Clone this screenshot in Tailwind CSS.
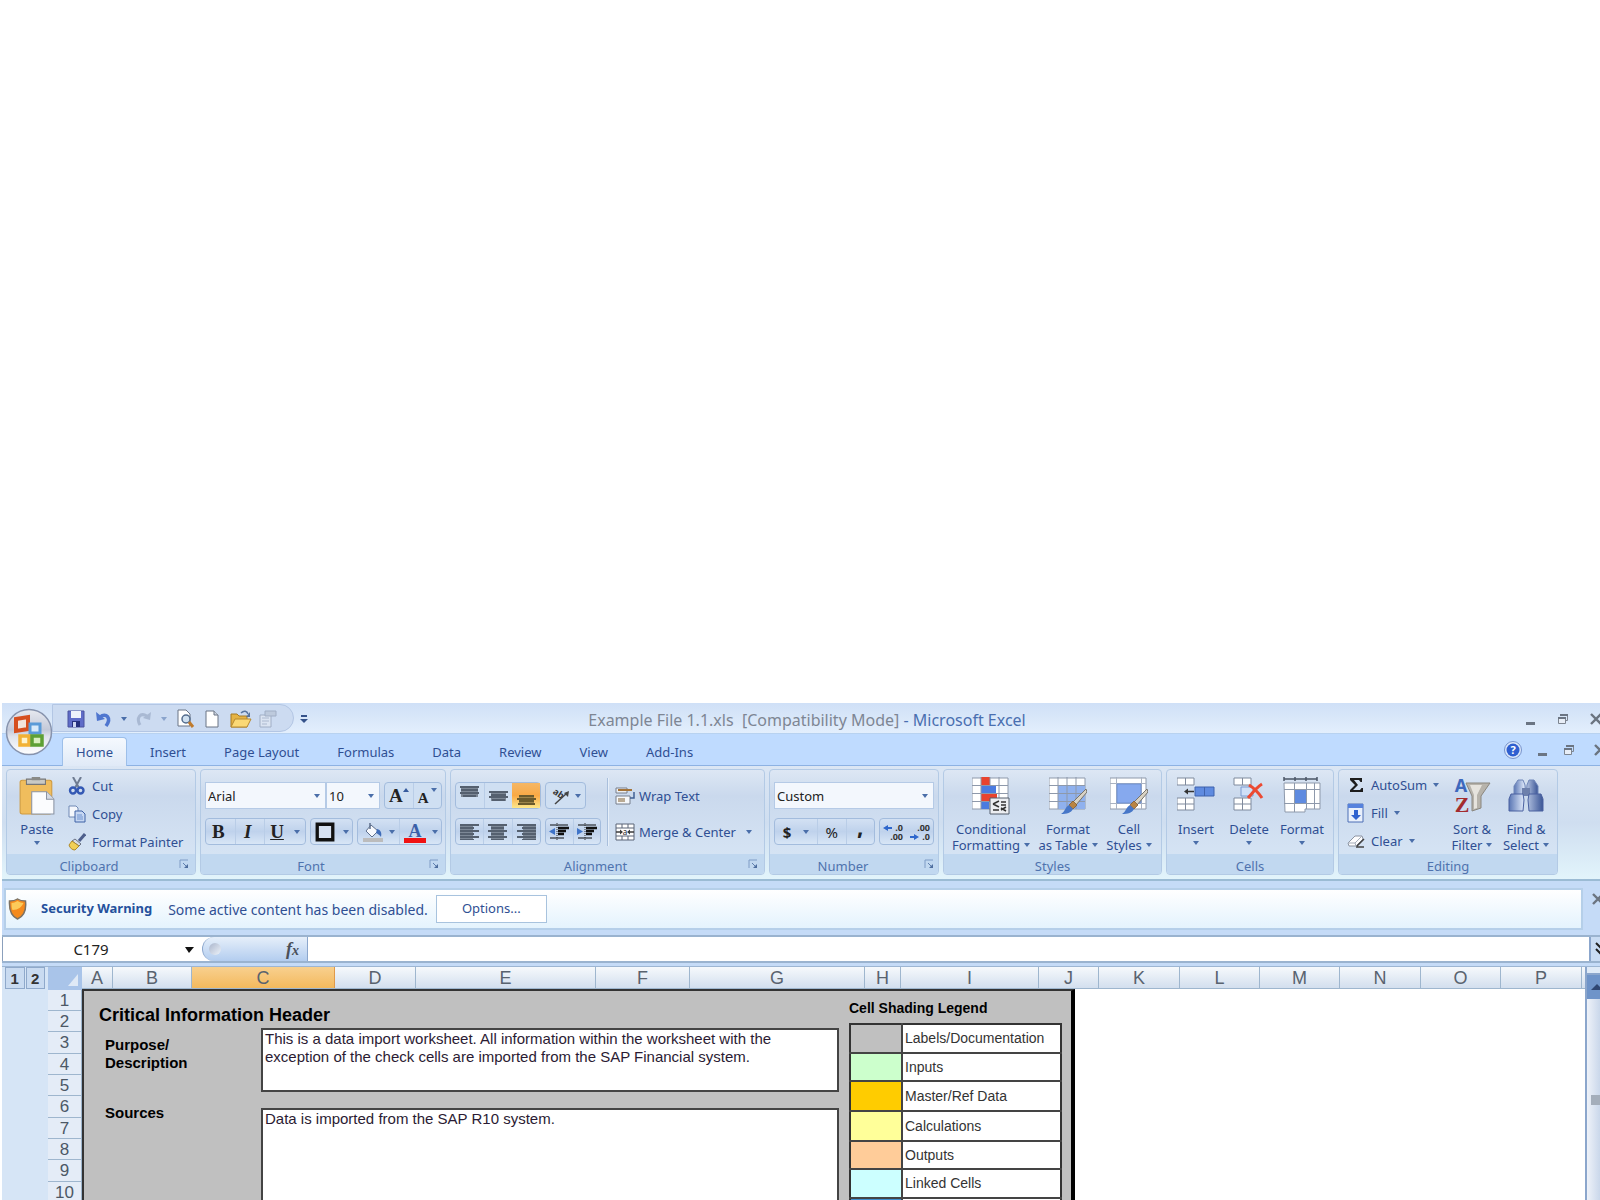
<!DOCTYPE html>
<html lang="en">
<head>
  <meta charset="UTF-8">
  <meta name="viewport" content="width=device-width, initial-scale=1.0">
  <title>Example File 1.1.xls [Compatibility Mode] - Microsoft Excel</title>
  <script src="https://cdn.jsdelivr.net/npm/@tailwindcss/browser@4"></script>
</head>
<body class="h-screen overflow-hidden bg-white pt-[703px] pl-[2px] text-[13px] text-[#2f4f93] font-['Noto_Sans','Open_Sans',sans-serif]">

  <!-- Shared icons -->
  <svg class="hidden">
    <symbol id="down" viewBox="0 0 6 4"><path d="M0 0h6L3 4z" fill="#4a6ea9"/></symbol>
    <symbol id="launcher" viewBox="0 0 10 10"><path d="M1 9V1h8" fill="none" stroke="#7f9cc6"/><path d="M4 4l4 4" stroke="#5f7fae"/><path d="M9 5v4H5z" fill="#4f6f9f"/></symbol>
    <symbol id="min" viewBox="0 0 12 12"><path d="M1 9h9v3H1z" fill="#6b7583"/></symbol>
    <symbol id="restore" viewBox="0 0 12 12"><path d="M3.500 2V1.500h7v6H9" fill="none" stroke="#7d8590"/><path d="M3 1h8v2H3z" fill="#6b7583"/><path d="M1.500 4.500h7v6h-7z" fill="#e8eef7" stroke="#7d8590"/><path d="M1 4h8v2H1z" fill="#6b7583"/></symbol>
    <symbol id="close" viewBox="0 0 14 12"><path d="M2 1l10 10M12 1L2 11" stroke="#6b7480" stroke-width="2.400"/></symbol>
    <symbol id="brush" viewBox="0 0 26 26"><path d="M25 1L12 14l3 3L26 4z" fill="#d8d2c4" stroke="#77736a"/><path d="M12 13l4 4-4 4-4-4z" fill="#b98443" stroke="#7b5425" stroke-width=".7"/><path d="M8 17l4 4c-2 4-6 5-12 5 4-2 4-7 8-9z" fill="#4777c8"/></symbol>
  </svg>

  <div class="-mr-3 flex h-full flex-col bg-[#c5dbf7]">

    <!-- Title bar -->
    <header class="relative grid h-[31px] shrink-0 grid-cols-[1fr_auto_1fr] items-center bg-linear-to-b from-[#cfe0f7] via-[#d9e7f9] to-[#e3effd] border-b border-[#b8d2f0]">
      <button aria-label="Office" class="absolute left-[3px] top-[5px] z-10">
        <svg class="size-[48px]" viewBox="0 0 48 48">
          <defs><linearGradient id="orb" x1="0" y1="0" x2="0" y2="1"><stop offset="0" stop-color="#e8eaf0"/><stop offset=".45" stop-color="#c3c9d9"/><stop offset=".6" stop-color="#dfe3ec"/><stop offset="1" stop-color="#fff"/></linearGradient></defs>
          <circle cx="24" cy="24" r="22.500" fill="url(#orb)" stroke="#8793ad" stroke-width="1.500"/>
          <path d="M11 11l12-2v12l-12 2z" fill="#f3e4dc" stroke="#d64f1e" stroke-width="4"/>
          <rect x="25" y="16" width="10" height="9" fill="#d8eafa" stroke="#5a9bd8" stroke-width="3"/>
          <rect x="15" y="28" width="9" height="9" fill="#fdf3cc" stroke="#f2b134" stroke-width="3.500"/>
          <path d="M27 28h10v9H27z" fill="#d9efbf" stroke="#5da035" stroke-width="3.500"/>
        </svg>
      </button>
      <div class="ml-[50px] flex h-[28px] w-[242px] items-center rounded-r-full border border-[#b3c6e4] bg-[#ccdbf1] pt-0.5 pl-[14px]">
        <button aria-label="Save" class="w-[28px]"><svg class="size-[18px]" viewBox="0 0 18 18"><path d="M1 1h16v16H1z" fill="#5f6cc8" stroke="#4a529e"/><path d="M4 1h10v7H4z" fill="#eef2fb"/><path d="M5 11h8v6H5z" fill="#25307e"/><path d="M6 12h3v5H6z" fill="#cdd6f2"/></svg></button>
        <button aria-label="Undo" class="flex w-[40px] items-center gap-2"><svg class="size-[18px]" viewBox="0 0 18 18"><path d="M5 7c6-5 12 1 6 9" fill="none" stroke="#4f76cf" stroke-width="3.500"/><path d="M1 2l1 9 8-2z" fill="#4f76cf"/></svg><svg class="h-1 w-1.5"><use href="#down"/></svg></button>
        <button aria-label="Redo" class="flex w-[40px] items-center gap-2 opacity-50"><svg class="size-[18px]" viewBox="0 0 18 18"><path d="M12 6C5 2 1 8 5 15" fill="none" stroke="#8798b6" stroke-width="3"/><path d="M16 2l-1 8-7-2z" fill="#8798b6"/></svg><svg class="h-1 w-1.5"><use href="#down"/></svg></button>
        <button aria-label="Print Preview" class="w-[28px]"><svg class="size-[20px]" viewBox="0 0 20 20"><path d="M3 1h8l4 4v12H3z" fill="#fff" stroke="#6b7585"/><circle cx="11" cy="10" r="4" fill="#cfe0f0" stroke="#536c8d" stroke-width="1.500"/><path d="M14 13l4 5" stroke="#c07b2d" stroke-width="3"/></svg></button>
        <button aria-label="New" class="w-[27px]"><svg class="size-[18px]" viewBox="0 0 18 18"><path d="M3 1h8l4 4v12H3z" fill="#fff" stroke="#6b7585"/><path d="M11 1v4h4" fill="#ccd4e0" stroke="#6b7585"/></svg></button>
        <button aria-label="Open" class="w-[29px]"><svg class="h-[18px] w-[22px]" viewBox="0 0 22 18"><path d="M1 4h6l2 2h8v11H1z" fill="#e5b344" stroke="#a67a25"/><path d="M5 9h16l-4 8H1z" fill="#fbd976" stroke="#b78a31"/><path d="M11 3c3-3 6-2 7 1" fill="none" stroke="#56749f" stroke-width="1.500"/><path d="M20 2v5h-4z" fill="#56749f"/></svg></button>
        <button aria-label="Properties" class="opacity-60"><svg class="size-[18px]" viewBox="0 0 18 18"><path d="M1 5h11v12H1z" fill="#e6ebf3" stroke="#8492aa"/><path d="M3 8h7M3 11h7M3 14h5" stroke="#97a4ba"/><path d="M6 1h11v5H6z" fill="#b4bfd0" stroke="#8492aa"/></svg></button>
      </div>
      <button aria-label="Customize Quick Access Toolbar" class="absolute left-[298px] top-[11px]"><svg class="h-2.5 w-2" viewBox="0 0 8 10"><path d="M1 1h6v2H1zM0 5h8L4 9z" fill="#35528a"/></svg></button>
      <h1 class="whitespace-pre pt-1 text-[16px] leading-6 text-[#4a6fb0]"><span class="text-[#7e8694]">Example File 1.1.xls  [Compatibility Mode]</span> - Microsoft Excel</h1>
      <div class="flex items-center justify-end gap-5 pt-0.5 pr-[9px]">
        <button aria-label="Minimize"><svg class="size-3"><use href="#min"/></svg></button>
        <button aria-label="Restore"><svg class="size-3"><use href="#restore"/></svg></button>
        <button aria-label="Close"><svg class="h-3 w-[14px]"><use href="#close"/></svg></button>
      </div>
    </header>

    <!-- Tabs -->
    <nav class="flex h-8 shrink-0 items-end gap-2 border-b border-[#8db2e3] bg-[#bfdbff] pl-[60px] pr-[5px]">
      <button class="-mb-px h-[29px] rounded-t border border-b-0 border-[#9dbfe9] bg-linear-to-b from-[#f5f9fe] to-[#e0eaf7] px-[13px] pt-0.5">Home</button>
      <button class="h-[28px] px-[15px] pt-1">Insert</button>
      <button class="h-[28px] px-[15px] pt-1">Page Layout</button>
      <button class="h-[28px] px-[15px] pt-1">Formulas</button>
      <button class="h-[28px] px-[15px] pt-1">Data</button>
      <button class="h-[28px] px-[15px] pt-1">Review</button>
      <button class="h-[28px] px-[15px] pt-1">View</button>
      <button class="h-[28px] px-[15px] pt-1">Add-Ins</button>
      <div class="ml-auto flex h-full items-center gap-[14px]">
        <button aria-label="Help"><svg class="size-5" viewBox="0 0 20 20"><circle cx="10" cy="10" r="8.500" fill="#dbe8fa" stroke="#7893cc"/><circle cx="10" cy="10" r="6.500" fill="#2f5fd0"/><text x="10" y="14" text-anchor="middle" font-size="11" font-weight="bold" fill="#fff">?</text></svg></button>
        <button aria-label="Minimize workbook"><svg class="size-3"><use href="#min"/></svg></button>
        <button aria-label="Restore workbook"><svg class="size-3"><use href="#restore"/></svg></button>
        <button aria-label="Close workbook" class="ml-1"><svg class="h-3 w-[14px]"><use href="#close"/></svg></button>
      </div>
    </nav>

    <!-- Ribbon -->
    <div class="flex h-[115px] shrink-0 gap-1 border-b-2 border-[#9bbbd4] bg-linear-to-b from-[#dbe6f4] via-[#cfdef0] to-[#e2f4fb] px-1 pt-[3px] pb-1 leading-4">

      <section class="flex w-[190px] flex-col overflow-hidden rounded border border-[#b3cae5] bg-linear-to-b from-[#dde7f4] via-[#cad9ed] via-25% to-[#d9e7f6]">
        <div class="flex flex-1 pl-1">
          <button class="flex w-[52px] flex-col items-center pt-[7px]">
            <svg class="size-[38px]" viewBox="0 0 36 36"><rect x="2" y="3" width="30" height="32" rx="2" fill="#f0bd5d" stroke="#cf9a3f"/><path d="M8 2h18v5H8z" fill="#c9c9c4" stroke="#777"/><path d="M13 0h8v3h-8z" fill="#8a8a86"/><path d="M13 14h14l7 7v14H13z" fill="#fbfcfe" stroke="#8a93a3"/><path d="M27 14v7h7" fill="#d5dae3" stroke="#8a93a3"/></svg>
            <span class="mt-1.5">Paste</span>
            <svg class="mt-1 h-1 w-1.5"><use href="#down"/></svg>
          </button>
          <div class="flex flex-col gap-2.5 pt-[7px] pl-[5px]">
            <button class="flex items-center gap-1.5"><svg class="size-[18px]" viewBox="0 0 18 18"><path d="M5 0l6 11M13 0L7 11" stroke="#6f7c92" stroke-width="2"/><circle cx="5" cy="13.500" r="3" fill="none" stroke="#3459b4" stroke-width="2.400"/><circle cx="12.500" cy="13.500" r="3" fill="none" stroke="#3459b4" stroke-width="2.400"/></svg>Cut</button>
            <button class="flex items-center gap-1.5"><svg class="size-[18px]" viewBox="0 0 18 18"><path d="M1 1h7l2 2v9H1z" fill="#f4f7fc" stroke="#6f88b4"/><path d="M7 6h7l3 3v8H7z" fill="#c6d7f2" stroke="#3f62a6"/><path d="M9 10h5M9 12h6M9 14h6" stroke="#6f93d0"/></svg>Copy</button>
            <button class="flex items-center gap-1.5 whitespace-nowrap"><svg class="size-[18px]" viewBox="0 0 18 18"><path d="M17 1l-6 7" stroke="#4e5f8c" stroke-width="3"/><path d="M7 6l6 5-2 2-7-5z" fill="#d7dbe4" stroke="#6b7384"/><path d="M4 8l7 5-4 4c-3 0-5-2-6-5z" fill="#f1cf57" stroke="#b08b2b"/></svg>Format Painter</button>
          </div>
        </div>
        <footer class="flex h-5 items-center bg-[#c1d8f0] pr-1.5 text-[#4f73ae]"><span class="flex-1 pt-1 pr-2 text-center">Clipboard</span><button aria-label="Clipboard options"><svg class="size-2.5"><use href="#launcher"/></svg></button></footer>
      </section>

      <section class="flex w-[246px] flex-col overflow-hidden rounded border border-[#b3cae5] bg-linear-to-b from-[#dde7f4] via-[#cad9ed] via-25% to-[#d9e7f6]">
        <div class="flex flex-1 flex-col gap-[9px] pt-3 pl-1">
          <div class="flex h-[27px]">
            <div class="relative w-[121px]"><select aria-label="Font name" class="h-full w-full appearance-none border border-[#b5cae6] bg-[#f3f7fd] pl-0.5 text-[#222]"><option>Arial</option></select><svg class="absolute right-1.5 top-3 h-1 w-1.5"><use href="#down"/></svg></div>
            <div class="relative w-[54px]"><select aria-label="Font size" class="h-full w-full appearance-none border border-[#b5cae6] bg-[#f3f7fd] pl-0.5 text-[#222]"><option>10</option></select><svg class="absolute right-1.5 top-3 h-1 w-1.5"><use href="#down"/></svg></div>
            <div class="ml-1 flex w-[58px] rounded-sm border border-[#a3bcdd] bg-[#cfdff2] font-['Liberation_Serif',serif] font-bold text-[#222]">
              <button aria-label="Grow font" class="flex flex-1 items-center justify-center border-r border-[#b9cde7] text-[19px]">A<svg class="mb-3 size-1.5" viewBox="0 0 6 6"><path d="M0 5h6L3 1z" fill="#365a9d"/></svg></button>
              <button aria-label="Shrink font" class="flex flex-1 items-center justify-center pt-1 text-[15px]">A<svg class="mb-4 ml-0.5 h-1 w-1.5"><use href="#down"/></svg></button>
            </div>
          </div>
          <div class="flex h-[27px] gap-1 font-['Liberation_Serif',serif] text-[19px] text-[#222]">
            <div class="flex w-[101px] rounded-sm border border-[#a3bcdd] bg-linear-to-b from-[#d3e1f3] via-[#bfd2ec] to-[#d8e6f6]">
              <button class="flex-1 pr-1 font-black">B</button>
              <button class="flex-1 border-x border-[#b9cde7] pr-1 font-bold italic">I</button>
              <button class="flex w-[40px] items-center justify-center gap-2.5 font-bold"><span class="underline">U</span><svg class="h-1 w-1.5"><use href="#down"/></svg></button>
            </div>
            <button aria-label="Borders" class="flex w-[43px] items-center justify-center gap-2 rounded-sm border border-[#a3bcdd] bg-linear-to-b from-[#d3e1f3] via-[#bfd2ec] to-[#d8e6f6]"><svg class="size-5" viewBox="0 0 18 18"><path d="M2 2h14v14H2z" fill="#d7e2f2" stroke="#111" stroke-width="3"/></svg><svg class="h-1 w-1.5"><use href="#down"/></svg></button>
            <div class="flex w-[85px] rounded-sm border border-[#a3bcdd] bg-linear-to-b from-[#d3e1f3] via-[#bfd2ec] to-[#d8e6f6]">
              <button aria-label="Fill color" class="flex flex-1 items-center justify-center gap-1.5 border-r border-[#b9cde7]"><svg class="size-[20px]" viewBox="0 0 20 20"><path d="M8 3l7 6-6 6-6-6z" fill="#f7f9fd" stroke="#5d6e8b"/><path d="M7 1v6" stroke="#5d6e8b" stroke-width="1.500"/><path d="M14 7c4 1 5 4 4 8-1-2-3-3-5-4z" fill="#3f6cb8"/><path d="M0 16h20v4H0z" fill="#bcbcbc"/></svg><svg class="h-1 w-1.5"><use href="#down"/></svg></button>
              <button aria-label="Font color" class="flex flex-1 items-center justify-center gap-1.5"><svg class="size-[22px]" viewBox="0 0 22 22"><text x="11" y="16" text-anchor="middle" font-size="18" font-weight="bold" fill="#3a5fa8">A</text><path d="M0 17h22v5H0z" fill="#f01212"/></svg><svg class="h-1 w-1.5"><use href="#down"/></svg></button>
            </div>
          </div>
        </div>
        <footer class="flex h-5 items-center bg-[#c1d8f0] pr-1.5 text-[#4f73ae]"><span class="flex-1 pt-1 pr-2 text-center">Font</span><button aria-label="Font options"><svg class="size-2.5"><use href="#launcher"/></svg></button></footer>
      </section>

      <section class="flex w-[315px] flex-col overflow-hidden rounded border border-[#b3cae5] bg-linear-to-b from-[#dde7f4] via-[#cad9ed] via-25% to-[#d9e7f6]">
        <div class="flex flex-1 pl-1">
          <div class="flex flex-col gap-[9px] pt-3">
            <div class="flex h-[27px] gap-1">
              <div class="flex w-[86px] rounded-sm border border-[#a3bcdd] bg-[#cfdff2]">
                <button aria-label="Top align" class="flex flex-1 items-center justify-center border-r border-[#b9cde7]"><svg class="h-5 w-[19px]" viewBox="0 0 19 20"><path d="M1 0h17v11H1z" fill="#7d8896"/><path d="M0 0h19v2H0zM0 6h19v2H0zM1 3h17v2H1zM3 9h13v2H3z" fill="#55606f"/></svg></button>
                <button aria-label="Middle align" class="flex flex-1 items-center justify-center"><svg class="h-5 w-[19px]" viewBox="0 0 19 20"><path d="M2 5h15v10H2z" fill="#7d8896"/><path d="M0 5h19v2H0zM2 8h15v2H2zM0 10h19v2H0zM3 13h13v2H3z" fill="#55606f"/></svg></button>
                <button aria-label="Bottom align" class="flex flex-1 items-center justify-center bg-linear-to-b from-[#f5b765] via-[#f9a944] to-[#fde78a]"><svg class="h-5 w-[19px]" viewBox="0 0 19 20"><path d="M2 9h15v10H2z" fill="#9c844a"/><path d="M2 9h15v2H2zM0 12h19v2H0zM2 14h15v2H2zM1 17h17v2H1z" fill="#6b5a2c"/></svg></button>
              </div>
              <button aria-label="Orientation" class="flex w-[41px] items-center justify-center gap-1 rounded-sm border border-[#a3bcdd] bg-[#cfdff2]"><svg class="h-[18px] w-5" viewBox="0 0 20 18"><text x="1" y="9" font-size="9" font-weight="bold" fill="#333" transform="rotate(35 6 8)">ab</text><path d="M4 17L16 6" stroke="#444" stroke-width="1.500"/><path d="M18 4l-1 6-4-4z" fill="#444"/></svg><svg class="h-1 w-1.5"><use href="#down"/></svg></button>
            </div>
            <div class="flex h-[27px] gap-1">
              <div class="flex w-[86px] rounded-sm border border-[#a3bcdd] bg-linear-to-b from-[#d3e1f3] via-[#bfd2ec] to-[#d8e6f6]">
                <button aria-label="Align left" class="flex flex-1 items-center justify-center border-r border-[#b9cde7]"><svg class="h-4 w-[19px]" viewBox="0 0 19 16"><path d="M0 0h13v16H0z" fill="#7d8896"/><path d="M0 0h19v2H0zM0 3h14v2H0zM0 6h19v2H0zM0 9h14v2H0zM0 12h19v2H0zM0 15h14v1H0z" fill="#55606f"/></svg></button>
                <button aria-label="Center" class="flex flex-1 items-center justify-center border-r border-[#b9cde7]"><svg class="h-4 w-[19px]" viewBox="0 0 19 16"><path d="M3 0h13v16H3z" fill="#7d8896"/><path d="M0 0h19v2H0zM3 3h13v2H3zM0 6h19v2H0zM3 9h13v2H3zM0 12h19v2H0zM3 15h13v1H3z" fill="#55606f"/></svg></button>
                <button aria-label="Align right" class="flex flex-1 items-center justify-center"><svg class="h-4 w-[19px]" viewBox="0 0 19 16"><path d="M6 0h13v16H6z" fill="#7d8896"/><path d="M0 0h19v2H0zM5 3h14v2H5zM0 6h19v2H0zM5 9h14v2H5zM0 12h19v2H0zM5 15h14v1H5z" fill="#55606f"/></svg></button>
              </div>
              <div class="flex w-[56px] rounded-sm border border-[#a3bcdd] bg-linear-to-b from-[#d3e1f3] via-[#bfd2ec] to-[#d8e6f6]">
                <button aria-label="Decrease indent" class="flex flex-1 items-center justify-center border-r border-[#b9cde7]"><svg class="h-[18px] w-5" viewBox="0 0 20 18"><path d="M1 2h18M1 15h14" stroke="#6b7480" stroke-width="2"/><path d="M9 5h11M9 8h8M9 11h6" stroke="#111" stroke-width="2.500"/><path d="M8 0v18" stroke="#333" stroke-dasharray="1 1"/><path d="M6 5v7L0 8.500z" fill="#3f74c9"/></svg></button>
                <button aria-label="Increase indent" class="flex flex-1 items-center justify-center"><svg class="h-[18px] w-5" viewBox="0 0 20 18"><path d="M1 2h18M1 15h14" stroke="#6b7480" stroke-width="2"/><path d="M9 5h11M9 8h8M9 11h6" stroke="#111" stroke-width="2.500"/><path d="M8 0v18" stroke="#333" stroke-dasharray="1 1"/><path d="M0 5v7l6-3.500z" fill="#3f74c9"/></svg></button>
              </div>
            </div>
          </div>
          <div class="mx-1.5 mt-2 mb-2 w-0.5 border-l border-[#a9bfdc] bg-[#e6eff9]"></div>
          <div class="flex flex-col gap-[18px] pt-[17px] whitespace-nowrap">
            <button class="flex items-center gap-1"><svg class="h-[18px] w-5" viewBox="0 0 20 18"><path d="M1 1h11v5H1z" fill="#eceff4" stroke="#777f8c"/><path d="M3 3h14" stroke="#a4743a" stroke-width="2"/><path d="M1 9h14v8H1z" fill="#f6f8fb" stroke="#777f8c"/><path d="M3 11h7v4H3z" fill="#b9aa94"/><path d="M19 5v6h-4" fill="none" stroke="#3f5f93" stroke-width="1.500"/></svg>Wrap Text</button>
            <button class="flex items-center gap-1"><svg class="h-[18px] w-5" viewBox="0 0 20 18"><path d="M1 1h18v16H1zM1 5h18M1 13h18M7 1v4M13 1v4M7 13v4M13 13v4" fill="#fff" stroke="#5a6576"/><path d="M1 9h5M19 9h-5" stroke="#3b3b3b" stroke-width="1.500"/><path d="M5 6.500v5L8 9zM15 6.500v5L12 9z" fill="#3b3b3b"/><text x="10" y="12" text-anchor="middle" font-size="8" fill="#222">a</text></svg>Merge &amp; Center<svg class="ml-1.5 h-1 w-1.5"><use href="#down"/></svg></button>
          </div>
        </div>
        <footer class="flex h-5 items-center bg-[#c1d8f0] pr-1.5 text-[#4f73ae]"><span class="flex-1 pt-1 pr-2 text-center">Alignment</span><button aria-label="Alignment options"><svg class="size-2.5"><use href="#launcher"/></svg></button></footer>
      </section>

      <section class="flex w-[170px] flex-col overflow-hidden rounded border border-[#b3cae5] bg-linear-to-b from-[#dde7f4] via-[#cad9ed] via-25% to-[#d9e7f6]">
        <div class="flex flex-1 flex-col gap-[9px] px-1 pt-3">
          <div class="relative h-[27px]"><select aria-label="Number format" class="h-full w-full appearance-none border border-[#b5cae6] bg-[#f3f7fd] pl-0.5 text-[#222]"><option>Custom</option></select><svg class="absolute right-1.5 top-3 h-1 w-1.5"><use href="#down"/></svg></div>
          <div class="flex h-[27px] gap-1 text-[15px] text-[#222]">
            <div class="flex w-[101px] rounded-sm border border-[#a3bcdd] bg-linear-to-b from-[#d3e1f3] via-[#bfd2ec] to-[#d8e6f6]">
              <button class="flex w-[42px] items-center justify-center gap-3 font-bold">$<svg class="h-1 w-1.5"><use href="#down"/></svg></button>
              <button class="flex-1 border-x border-[#b9cde7]">%</button>
              <button class="flex-1 pb-2 text-[19px] font-black">,</button>
            </div>
            <div class="flex flex-1 rounded-sm border border-[#a3bcdd] bg-linear-to-b from-[#d3e1f3] via-[#bfd2ec] to-[#d8e6f6]">
              <button aria-label="Increase decimal" class="flex flex-1 items-center justify-center"><svg class="h-5 w-5 overflow-visible" viewBox="0 0 20 20"><text x="20" y="9" text-anchor="end" font-size="9" font-weight="bold" fill="#333">.0</text><text x="20" y="18" text-anchor="end" font-size="9" font-weight="bold" fill="#333">.00</text><path d="M0 6l5-3v2h4v2H5v2z" fill="#2f67cc"/></svg></button>
              <button aria-label="Decrease decimal" class="flex flex-1 items-center justify-center"><svg class="h-5 w-5 overflow-visible" viewBox="0 0 20 20"><text x="20" y="9" text-anchor="end" font-size="9" font-weight="bold" fill="#333">.00</text><text x="20" y="18" text-anchor="end" font-size="9" font-weight="bold" fill="#333">.0</text><path d="M9 15l-5-3v2H0v2h4v2z" fill="#2f67cc"/></svg></button>
            </div>
          </div>
        </div>
        <footer class="flex h-5 items-center bg-[#c1d8f0] pr-1 text-[#4f73ae]"><span class="flex-1 pt-1 pr-2 text-center">Number</span><button aria-label="Number options"><svg class="size-2.5"><use href="#launcher"/></svg></button></footer>
      </section>

      <section class="flex w-[219px] flex-col overflow-hidden rounded border border-[#b3cae5] bg-linear-to-b from-[#dde7f4] via-[#cad9ed] via-25% to-[#d9e7f6]">
        <div class="flex flex-1 pl-1 whitespace-nowrap">
          <button class="flex w-[86px] flex-col items-center pt-[7px]">
            <svg class="size-[38px]" viewBox="0 0 38 38"><path d="M0 1h36v31H0z" fill="#fff" stroke="#8e99ab"/><path d="M9 0h9v8H9zM9 17h16v8H9z" fill="#e8432e"/><path d="M9 9h15v8H9zM9 25h8v7H9z" fill="#4b7be0"/><path d="M0 8.500h36M0 16.500h36M0 24.500h36M9 0v32M18 0v8M27 0v32M18 25v7" stroke="#8e99ab"/><path d="M18 21h19v16H18z" fill="#eceef2" stroke="#555e6c"/><path d="M21 27l6-3M21 27l6 3M21 33h6M29 25h5M29 28h5M29 33l5-3M29 31l5 3" stroke="#333" stroke-width="1.500"/></svg>
            <span class="mt-1.5">Conditional</span>
            <span class="flex items-center gap-1">Formatting<svg class="h-1 w-1.5"><use href="#down"/></svg></span>
          </button>
          <button class="flex w-[68px] flex-col items-center pt-[7px]">
            <svg class="size-[38px]" viewBox="0 0 38 38"><path d="M0 1h36v31H0z" fill="#fff" stroke="#8e99ab"/><path d="M9 9h27v23H9z" fill="#8fb1ee"/><path d="M0 8.500h36M0 16.500h36M0 24.500h36M9 0v32M18 0v32M27 0v32" stroke="#8e99ab"/><use href="#brush" x="12" y="11" width="26" height="26"/></svg>
            <span class="mt-1.5">Format</span>
            <span class="flex items-center gap-1">as Table<svg class="h-1 w-1.5"><use href="#down"/></svg></span>
          </button>
          <button class="flex w-[54px] flex-col items-center pt-[7px]">
            <svg class="size-[38px]" viewBox="0 0 38 38"><path d="M0 1h36v31H0z" fill="#fff" stroke="#8e99ab"/><path d="M0 6.500h36M0 26.500h36M6.500 0v32M31.500 0v32" stroke="#aab3c2"/><path d="M7 7h24v19H7z" fill="#86a9ee" stroke="#7191cf"/><use href="#brush" x="12" y="11" width="26" height="26"/></svg>
            <span class="mt-1.5">Cell</span>
            <span class="flex items-center gap-1">Styles<svg class="h-1 w-1.5"><use href="#down"/></svg></span>
          </button>
        </div>
        <footer class="h-5 bg-[#c1d8f0] pt-1 text-center text-[#4f73ae]">Styles</footer>
      </section>

      <section class="flex w-[168px] flex-col overflow-hidden rounded border border-[#b3cae5] bg-linear-to-b from-[#dde7f4] via-[#cad9ed] via-25% to-[#d9e7f6]">
        <div class="flex flex-1 pl-0.5">
          <button class="flex w-[54px] flex-col items-center pt-[7px]">
            <svg class="size-[38px]" viewBox="0 0 38 38"><path d="M0 1h17v7H0zM0 21h17v12H0zM0 27h17M8.500 1v7M8.500 21v12" fill="#fff" stroke="#7f8a9d"/><path d="M18 10h19v9H18zM27.500 10v9" fill="#5f8be0" stroke="#3f63ad"/><path d="M9 14.500h8" stroke="#333" stroke-width="1.500"/><path d="M7 14.500l4-3v6z" fill="#333"/></svg>
            <span class="mt-1.5">Insert</span>
            <svg class="mt-1 h-1 w-1.5"><use href="#down"/></svg>
          </button>
          <button class="flex w-[52px] flex-col items-center pt-[7px]">
            <svg class="size-[38px]" viewBox="0 0 38 38"><path d="M4 1h17v7H4zM4 21h17v12H4zM4 27h17M12.500 1v7M12.500 21v12" fill="#fff" stroke="#7f8a9d"/><path d="M11 10h12v9H11z" fill="#cfe0f8" stroke="#7b9ad2"/><path d="M19 8c5 3 9 7 13 13M32 7c-5 3-9 8-14 14" fill="none" stroke="#ec4a32" stroke-width="3"/></svg>
            <span class="mt-1.5">Delete</span>
            <svg class="mt-1 h-1 w-1.5"><use href="#down"/></svg>
          </button>
          <button class="flex w-[54px] flex-col items-center pt-[7px]">
            <svg class="size-[38px]" viewBox="0 0 38 38"><path d="M1 2h33M1 0v4M12 0v4M23 0v4M34 0v4" stroke="#4b5566" stroke-width="1.500"/><path d="M1 6h36v26H22v3H2z" fill="#fff" stroke="#8e99ab"/><path d="M1 12.500h36M1 26.500h36M11.500 6v29M23.500 6v26M31.500 6v26" stroke="#8e99ab"/><path d="M12 13h11v13H12z" fill="#5f8be0"/></svg>
            <span class="mt-1.5">Format</span>
            <svg class="mt-1 h-1 w-1.5"><use href="#down"/></svg>
          </button>
        </div>
        <footer class="h-5 bg-[#c1d8f0] pt-1 text-center text-[#4f73ae]">Cells</footer>
      </section>

      <section class="flex w-[220px] flex-col overflow-hidden rounded border border-[#b3cae5] bg-linear-to-b from-[#dde7f4] via-[#cad9ed] via-25% to-[#d9e7f6]">
        <div class="flex flex-1 pl-2 whitespace-nowrap">
          <div class="flex w-[98px] flex-col gap-[9px] pt-1.5">
            <button class="flex items-center gap-1.5"><svg class="size-[18px]" viewBox="0 0 18 18"><path d="M3 2h12v4h-1.500L12 4H7l4 5-5 5h7l1.500-2H16v4H3v-2l5-5-5-5z" fill="#1d1d1d"/></svg>AutoSum<svg class="h-1 w-1.5"><use href="#down"/></svg></button>
            <button class="flex items-center gap-1.5"><svg class="h-5 w-[18px]" viewBox="0 0 18 20"><path d="M1 1h15v18H1z" fill="#e9f0fb" stroke="#4c6fb5"/><path d="M1 1h15v4H1z" fill="#5682dd"/><path d="M7 7h4v5h3l-5 5-5-5h3z" fill="#2f62cf"/></svg>Fill<svg class="h-1 w-1.5"><use href="#down"/></svg></button>
            <button class="flex items-center gap-1.5"><svg class="size-[18px]" viewBox="0 0 18 18"><path d="M8 4h7l1 3-7 7H2l-1-3z" fill="#fdfdfe" stroke="#8c94a2"/><path d="M9 14l-1-3H1M8 11l7-7" fill="none" stroke="#a5adba"/><path d="M9 15h8M10 14l7-7" stroke="#444" stroke-width="1.500"/></svg>Clear<svg class="h-1 w-1.5"><use href="#down"/></svg></button>
          </div>
          <button class="flex w-[54px] flex-col items-center pt-[7px]">
            <svg class="size-[38px] overflow-visible" viewBox="0 0 38 38"><text x="8" y="15" text-anchor="middle" font-size="18" font-weight="bold" fill="#3d68bd">A</text><text class="font-['Liberation_Serif',serif]" x="9" y="35" text-anchor="middle" font-size="22" font-weight="bold" fill="#a32b2e">Z</text><path d="M13 6h24L28 19v12l-9 3V19z" fill="#b7b3ab" stroke="#8a867e"/><path d="M17 8h12l-5 10v13l-3 1V18z" fill="#e6e3dd"/></svg>
            <span class="mt-1.5">Sort &amp;</span>
            <span class="flex items-center gap-1">Filter<svg class="h-1 w-1.5"><use href="#down"/></svg></span>
          </button>
          <button class="flex w-[54px] flex-col items-center pt-[7px]">
            <svg class="size-[38px]" viewBox="0 0 38 38"><defs><linearGradient id="lens"><stop offset="0" stop-color="#5a76b4"/><stop offset=".4" stop-color="#d3dff4"/><stop offset="1" stop-color="#3a5596"/></linearGradient></defs><path d="M11 3h5l2 5 1 10H7V9zM22 3h5l4 6v9H19l1-10z" fill="url(#lens)" stroke="#7187b8"/><path d="M15 11h8v8h-8z" fill="#6d80ac"/><path d="M4 17h12l1 6-1 11H2V22zM22 17h12l2 5v12H22l-1-11z" fill="url(#lens)" stroke="#4a61a0"/></svg>
            <span class="mt-1.5">Find &amp;</span>
            <span class="flex items-center gap-1">Select<svg class="h-1 w-1.5"><use href="#down"/></svg></span>
          </button>
        </div>
        <footer class="h-5 bg-[#c1d8f0] pt-1 text-center text-[#4f73ae]">Editing</footer>
      </section>
    </div>

    <!-- Security bar -->
    <div class="mt-[7px] mb-[5px] flex h-[42px] shrink-0 pl-0.5">
      <div class="flex flex-1 items-center border-2 border-[#b5cfe9] bg-linear-to-b from-white to-[#e4f3fd] pl-0.5">
        <svg class="h-[22px] w-[19px]" viewBox="0 0 19 22"><path d="M9.500 1c3 2 5 2 8 2 1 9-1 15-8 18C3 18 1 12 1.500 3c3 0 5 0 8-2z" fill="#f58a1c" stroke="#7b7265" stroke-width="1.500"/><path d="M9.500 3c-2 1-4 2-6 2 0 3 0 5 1 7 6 0 9-3 11-7-2 0-4-1-6-2z" fill="#fccb5a"/></svg>
        <strong class="ml-3.5 text-[#24509c]">Security Warning</strong>
        <span class="ml-4 text-[14px]">Some active content has been disabled.</span>
        <button class="ml-2 h-[28px] w-[111px] border border-[#a8c3de] bg-white">Options...</button>
      </div>
      <button aria-label="Close message bar" class="mb-5 w-[29px] pl-2"><svg class="h-3 w-[14px]"><use href="#close"/></svg></button>
    </div>

    <!-- Formula bar -->
    <div class="flex h-[28px] shrink-0 border-y-2 border-[#9ab3cf] bg-white">
      <div class="relative w-[200px] border-l border-[#8ba0bc]">
        <input aria-label="Name box" value="C179" class="h-full w-[176px] text-center text-[15px] text-[#222]">
        <svg class="absolute right-2 top-[10px] h-1.5 w-[9px]" viewBox="0 0 9 6"><path d="M0 0h9L4 6z" fill="#111"/></svg>
      </div>
      <div class="flex w-[106px] items-center justify-between rounded-l-full border-r border-l border-[#8ba6cc] bg-linear-to-b from-[#e6effa] to-[#b3cdef] pr-2 pl-1.5">
        <span class="size-3 rounded-full bg-linear-to-br from-[#aab6cc] to-[#eef3fa]"></span>
        <button aria-label="Insert function" class="font-['Liberation_Serif',serif] text-[18px] font-bold italic text-[#4a4f59]">f<span class="text-[14px]">x</span></button>
      </div>
      <input aria-label="Formula bar" class="min-w-0 flex-1">
      <button aria-label="Expand formula bar" class="w-[23px] border-l-2 border-[#8ba6cc] bg-[#c9dcf3] pl-1"><svg class="h-4 w-2.5" viewBox="0 0 10 16"><path d="M1 2l4 4 4-4M1 8l4 4 4-4" fill="none" stroke="#222" stroke-width="2"/></svg></button>
    </div>

    <!-- Sheet -->
    <div class="mt-[3px] flex min-h-0 flex-1 border-t border-[#9db6d3] font-['Liberation_Sans',Arial,sans-serif]">
      <div class="w-[46px] shrink-0 bg-[#d6e5f6] pl-[3px]">
        <div class="flex h-[22px] w-10 gap-px text-[15px] font-bold text-[#333]">
          <button class="flex-1 border border-[#8fa9cb] bg-[#c9dbf1]">1</button>
          <button class="flex-1 border border-[#8fa9cb] bg-[#c9dbf1]">2</button>
        </div>
      </div>
      <div class="flex w-[34px] shrink-0 flex-col bg-[#e4ecf7]">
        <button aria-label="Select all" class="flex h-[23px] shrink-0 items-end justify-end bg-[#a9c4e9] p-1"><svg class="h-3 w-2.5" viewBox="0 0 10 12"><path d="M10 0v12H0z" fill="#dfe9f6"/></svg></button>
        <div id="rowHeaders" class="text-center text-[17px] leading-[21px] text-[#4c5866]"></div>
      </div>
      <div class="flex min-w-0 flex-1 flex-col overflow-hidden bg-white">
        <div id="colHeaders" class="flex h-[22px] shrink-0 border-b border-[#9eb6ce] bg-linear-to-b from-[#f6f9fc] to-[#d3dfee] text-center text-[18px] leading-[22px] text-[#59636f]"></div>
        <div class="flex w-[993px] flex-1 border-t-2 border-r-4 border-l-2 border-t-[#333] border-r-black border-l-[#333] bg-[#c0c0c0] pl-[15px] text-black">
          <div class="w-[740px] shrink-0 pt-[11px]">
            <h2 class="h-[26px] text-[18px] font-bold leading-[26px]">Critical Information Header</h2>
            <div class="flex">
              <h3 class="w-[162px] pt-2 pl-1.5 text-[15px] font-bold leading-[18px]">Purpose/<br>Description</h3>
              <p class="h-[64px] w-[578px] border-2 border-[#444] bg-white pl-0.5 text-[15px] leading-[18px] text-[#2b1b33]">This is a data import worksheet. All information within the worksheet with the<br>exception of the check cells are imported from the SAP Financial system.</p>
            </div>
            <div class="mt-3 flex">
              <h3 class="w-[162px] pl-1.5 text-[15px] font-bold leading-[18px]">Sources</h3>
              <p class="mt-1 h-[140px] w-[578px] border-2 border-[#444] bg-white pl-0.5 text-[15px] leading-[18px] text-[#2b1b33]">Data is imported from the SAP R10 system.</p>
            </div>
          </div>
          <div class="ml-2.5 w-[213px] shrink-0 pt-[7px]">
            <h3 class="h-[25px] text-[14px] font-bold leading-5">Cell Shading Legend</h3>
            <table class="w-full border-collapse border-2 border-[#333] text-[14px] text-[#333]">
              <tbody>
                <tr class="h-[29px] border-b-2 border-[#444]"><td class="w-[52px] border-r-2 border-[#444] bg-[#c0c0c0]"></td><td class="bg-white pl-0.5">Labels/Documentation</td></tr>
                <tr class="h-[28px] border-b-2 border-[#444]"><td class="border-r-2 border-[#444] bg-[#ccffcc]"></td><td class="bg-white pl-0.5">Inputs</td></tr>
                <tr class="h-[30px] border-b-2 border-[#444]"><td class="border-r-2 border-[#444] bg-[#ffcc00]"></td><td class="bg-white pl-0.5">Master/Ref Data</td></tr>
                <tr class="h-[30px] border-b-2 border-[#444]"><td class="border-r-2 border-[#444] bg-[#ffff99]"></td><td class="bg-white pl-0.5">Calculations</td></tr>
                <tr class="h-[28px] border-b-2 border-[#444]"><td class="border-r-2 border-[#444] bg-[#ffcc99]"></td><td class="bg-white pl-0.5">Outputs</td></tr>
                <tr class="h-[29px] border-b-2 border-[#444]"><td class="border-r-2 border-[#444] bg-[#ccffff]"></td><td class="bg-white pl-0.5">Linked Cells</td></tr>
                <tr class="h-[29px]"><td class="border-r-2 border-[#444] bg-[#3f8fcf]"></td><td class="bg-white"></td></tr>
              </tbody>
            </table>
          </div>
        </div>
      </div>
      <!-- Vertical scrollbar -->
      <div class="flex w-[27px] shrink-0 flex-col border-l-2 border-[#8ba6cc] bg-linear-to-r from-[#eef2f9] to-[#a9bfdd]">
        <div class="h-2 border-b-2 border-[#8ba6cc] bg-[#dfeaf7]"></div>
        <button aria-label="Scroll up" class="h-[24px] bg-[#6f94c9] pl-1"><svg class="h-1.5 w-3" viewBox="0 0 12 6"><path d="M0 6h12L6 0z" fill="#2f4672"/></svg></button>
        <div class="mt-[96px] ml-1 h-2.5 bg-[#a4aebb]"></div>
      </div>
    </div>
  </div>

  <script>
    const columns = [
      ["A", 31], ["B", 79], ["C", 143], ["D", 81], ["E", 180], ["F", 94], ["G", 175], ["H", 36],
      ["I", 138], ["J", 60], ["K", 81], ["L", 80], ["M", 80], ["N", 81], ["O", 80], ["P", 81],
    ];
    const rowHeights = [21, 21, 22, 21, 21, 22, 21, 21, 22, 21];

    const colHeaders = document.getElementById("colHeaders");
    columns.forEach(([name, width]) => {
      const cell = document.createElement("div");
      cell.className = name === "C"
        ? "shrink-0 border-r border-[#e09a4a] bg-linear-to-b from-[#f8d08e] to-[#f3b95c]"
        : "shrink-0 border-r border-[#9eb6ce]";
      cell.style.width = width + "px";
      cell.textContent = name;
      colHeaders.appendChild(cell);
    });

    const rowHeaders = document.getElementById("rowHeaders");
    rowHeights.forEach((height, i) => {
      const cell = document.createElement("div");
      cell.className = "border-b border-r border-[#9eb6ce]";
      cell.style.height = height + "px";
      cell.textContent = i + 1;
      rowHeaders.appendChild(cell);
    });
  </script>
</body>
</html>
